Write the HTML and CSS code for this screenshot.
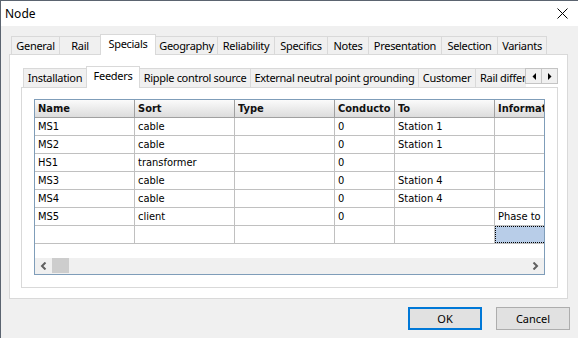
FILE: index.html
```html
<!DOCTYPE html>
<html lang="en">
<head>
    <meta charset="UTF-8">
    <title>Node</title>
    <link rel="stylesheet" href="styles.css">
</head>
<body>

<div class="window">
    <div class="titlebar">
        <span class="title">Node</span>
        <svg class="close" width="11" height="11" viewBox="0 0 11 11">
            <path d="M0.5 0.5 L10.5 10.5 M10.5 0.5 L0.5 10.5" stroke="#000" stroke-width="1" fill="none"/>
        </svg>
    </div>

    <div class="dialog">
        <div class="tabs outer-tabs">
            <div class="tab t-general">General</div>
            <div class="tab t-rail">Rail</div>
            <div class="tab t-specials active">Specials</div>
            <div class="tab t-geography">Geography</div>
            <div class="tab t-reliability">Reliability</div>
            <div class="tab t-specifics">Specifics</div>
            <div class="tab t-notes">Notes</div>
            <div class="tab t-presentation">Presentation</div>
            <div class="tab t-selection">Selection</div>
            <div class="tab t-variants">Variants</div>
        </div>

        <div class="panel outer-panel">
            <div class="tabs inner-tabs">
                <div class="tab-list">
                    <div class="tab t-installation">Installation</div>
                    <div class="tab t-feeders active">Feeders</div>
                    <div class="tab t-ripple">Ripple control source</div>
                    <div class="tab t-external">External neutral point grounding</div>
                    <div class="tab t-customer">Customer</div>
                    <div class="tab t-raildiff">Rail differential</div>
                </div>
                <div class="tab-scroll">
                    <span class="scroll-btn">
                        <svg width="4" height="7" viewBox="0 0 4 7"><polygon points="4,0 4,7 0.5,3.5" fill="#000"/></svg>
                    </span>
                    <span class="scroll-btn">
                        <svg width="4" height="7" viewBox="0 0 4 7"><polygon points="0,0 0,7 3.5,3.5" fill="#000"/></svg>
                    </span>
                </div>
            </div>

            <div class="panel inner-panel">
                <div class="grid">
                    <div class="grid-view">
                        <div class="grid-row head">
                            <div class="cell"><span class="label">Name</span></div>
                            <div class="cell"><span class="label">Sort</span></div>
                            <div class="cell"><span class="label">Type</span></div>
                            <div class="cell"><span class="label">Conductor</span></div>
                            <div class="cell"><span class="label">To</span></div>
                            <div class="cell"><span class="label">Information</span></div>
                        </div>
                        <div class="grid-row">
                            <div class="cell">MS1</div>
                            <div class="cell">cable</div>
                            <div class="cell"></div>
                            <div class="cell">0</div>
                            <div class="cell">Station 1</div>
                            <div class="cell"></div>
                        </div>
                        <div class="grid-row">
                            <div class="cell">MS2</div>
                            <div class="cell">cable</div>
                            <div class="cell"></div>
                            <div class="cell">0</div>
                            <div class="cell">Station 1</div>
                            <div class="cell"></div>
                        </div>
                        <div class="grid-row">
                            <div class="cell">HS1</div>
                            <div class="cell">transformer</div>
                            <div class="cell"></div>
                            <div class="cell">0</div>
                            <div class="cell"></div>
                            <div class="cell"></div>
                        </div>
                        <div class="grid-row">
                            <div class="cell">MS3</div>
                            <div class="cell">cable</div>
                            <div class="cell"></div>
                            <div class="cell">0</div>
                            <div class="cell">Station 4</div>
                            <div class="cell"></div>
                        </div>
                        <div class="grid-row">
                            <div class="cell">MS4</div>
                            <div class="cell">cable</div>
                            <div class="cell"></div>
                            <div class="cell">0</div>
                            <div class="cell">Station 4</div>
                            <div class="cell"></div>
                        </div>
                        <div class="grid-row">
                            <div class="cell">MS5</div>
                            <div class="cell">client</div>
                            <div class="cell"></div>
                            <div class="cell">0</div>
                            <div class="cell"></div>
                            <div class="cell">Phase to Phase</div>
                        </div>
                        <div class="grid-row">
                            <div class="cell"></div>
                            <div class="cell"></div>
                            <div class="cell"></div>
                            <div class="cell"></div>
                            <div class="cell"></div>
                            <div class="cell current"></div>
                        </div>
                    </div>
                    <div class="hscroll">
                        <span class="sb-arrow">
                            <svg width="7" height="8" viewBox="0 0 7 8"><path d="M5.5 0.5 L2 4 L5.5 7.5" stroke="#606060" stroke-width="2" fill="none"/></svg>
                        </span>
                        <span class="sb-thumb"></span>
                        <span class="sb-arrow sb-right">
                            <svg width="7" height="8" viewBox="0 0 7 8"><path d="M1.5 0.5 L5 4 L1.5 7.5" stroke="#606060" stroke-width="2" fill="none"/></svg>
                        </span>
                    </div>
                </div>
            </div>
        </div>

        <div class="buttons">
            <button class="btn default">OK</button>
            <button class="btn">Cancel</button>
        </div>
    </div>
</div>

</body>
</html>
```

FILE: styles.css
```css
* {
    box-sizing: border-box;
}
body {
    margin: 0;
    width: 578px;
    height: 338px;
    overflow: hidden;
    background: #f0f0f0;
    font-family: "Segoe UI", "Noto Sans", sans-serif;
    font-size: 11px;
    color: #000;
}
.window {
    height: 338px;
    border-left: 1px solid #5b6470;
    border-top: 1px solid #5b6470;
    display: flex;
    flex-direction: column;
}
.titlebar {
    height: 25px;
    background: #fff;
    display: flex;
    align-items: center;
    justify-content: space-between;
    padding: 0 10px 0 4px;
}
.title {
    font-size: 12px;
}
.dialog {
    display: flex;
    flex-direction: column;
    padding: 8px 0 0 8px;
}

/* tab strips */
.tabs {
    display: flex;
    align-items: flex-start;
    margin-bottom: -1px;
    z-index: 1;
}
.outer-tabs {
    height: 21px;
    padding-left: 2px;
}
.inner-tabs {
    height: 22px;
}
.tab-list {
    flex: 1;
    display: flex;
    align-items: flex-start;
    height: 22px;
    padding-left: 2px;
    overflow: hidden;
}
.tab {
    flex: none;
    height: 18px;
    margin-top: 2px;
    margin-left: -1px;
    border: 1px solid #d9d9d9;
    border-bottom: 0;
    background: #f0f0f0;
    text-align: center;
    line-height: 17px;
    letter-spacing: -0.3px;
    white-space: nowrap;
    overflow: hidden;
}
.tab:first-child {
    margin-left: 0;
}
.outer-tabs .tab.active {
    height: 21px;
    margin-top: 0;
    background: #fff;
}
.inner-tabs .tab {
    height: 19px;
}
.inner-tabs .tab.active {
    height: 22px;
    margin-top: 0;
    background: #fff;
}

.t-general { width: 49px; }
.t-rail { width: 42px; }
.t-specials { width: 56px; }
.t-geography { width: 63px; }
.t-reliability { width: 58px; }
.t-specifics { width: 54px; }
.t-notes { width: 42px; }
.t-presentation { width: 74px; }
.t-selection { width: 57px; }
.t-variants { width: 50px; }

.t-installation { width: 64px; }
.t-feeders { width: 54px; }
.t-ripple { width: 112px; }
.t-external { width: 169px; }
.t-customer { width: 58px; }
.t-raildiff { width: 80px; text-align: left; padding-left: 4px; }

.tab-scroll {
    display: flex;
    margin-top: 2px;
}
.scroll-btn {
    width: 17px;
    height: 16px;
    margin-left: -1px;
    border: 1px solid #c4c4c4;
    background: #f0f0f0;
    display: flex;
    align-items: center;
    justify-content: center;
}

/* panels */
.panel {
    background: #fff;
    border: 1px solid #d9d9d9;
}
.outer-panel {
    width: 559px;
    height: 245px;
    padding: 11px 9px 10px 11px;
    display: flex;
    flex-direction: column;
}
.inner-panel {
    height: 201px;
    padding: 11px 12px 12px 12px;
}

/* data grid */
.grid {
    width: 511px;
    height: 176px;
    border: 1px solid #7f9db9;
    display: flex;
    flex-direction: column;
    overflow: hidden;
    font-family: "DejaVu Sans Condensed", "Liberation Sans", sans-serif;
    font-size: 11px;
}
.grid-view {
    flex: 1;
    background: #fff;
    overflow: hidden;
}
.grid-row {
    display: grid;
    grid-template-columns: 100px 100px 100px 60px 100px 100px;
    height: 18px;
}
.cell {
    border-right: 1px solid #c0c0c0;
    border-bottom: 1px solid #c0c0c0;
    padding-left: 3px;
    line-height: 17px;
    white-space: nowrap;
    overflow: hidden;
}
.head .cell {
    background: linear-gradient(#fbfbfb, #dcdcdc);
    border-color: #a0a0a0;
    font-weight: bold;
    color: #111;
}
.head .label {
    display: block;
    margin-right: 3px;
    overflow: hidden;
}
.cell.current {
    position: relative;
    background: #b8cde8;
}
.cell.current::after {
    content: "";
    position: absolute;
    top: 0;
    left: 0;
    right: 0;
    bottom: 0;
    border: 1px dotted #000;
}

.hscroll {
    height: 16px;
    background: #f0f0f0;
    display: flex;
    align-items: flex-start;
}
.sb-arrow {
    width: 17px;
    height: 16px;
    display: flex;
    align-items: center;
    justify-content: center;
}
.sb-thumb {
    width: 17px;
    height: 15px;
    background: #cdcdcd;
}
.sb-right {
    margin-left: auto;
}

/* dialog buttons */
.buttons {
    display: flex;
    justify-content: flex-end;
    gap: 14px;
    margin-top: 8px;
    padding-right: 8px;
}
.btn {
    width: 74px;
    height: 23px;
    padding: 0;
    background: #e1e1e1;
    border: 1px solid #adadad;
    font-family: inherit;
    font-size: 11px;
    color: #000;
}
.btn.default {
    border: 2px solid #0078d7;
}
```
